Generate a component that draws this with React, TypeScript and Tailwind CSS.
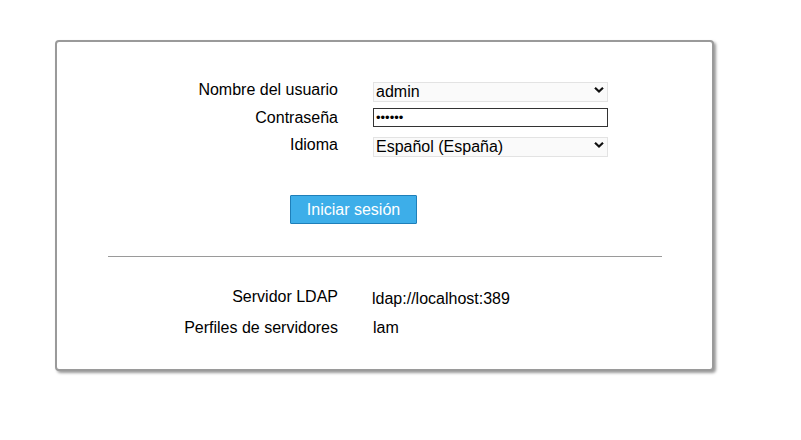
import { useState } from "react";

const Chevron = () => (
  <svg
    className="pointer-events-none absolute right-[4px] top-1/2 -translate-y-1/2"
    width="10"
    height="7"
    viewBox="0 0 10 7"
  >
    <path d="M1 1.2 L5 5 L9 1.2" fill="none" stroke="#111" strokeWidth="2.2" />
  </svg>
);

interface ISelectProps {
  value: string;
  options: string[];
  onChange: (v: string) => void;
}

const Select = ({ value, options, onChange }: ISelectProps) => (
  <div className="relative h-[20px] w-[235px]">
    <select
      value={value}
      onChange={e => onChange(e.target.value)}
      className="h-full w-full appearance-none rounded-none border border-[#e3e3e3] bg-[#fafafa] pl-[2px] text-[16px] leading-[18px] text-black outline-none"
    >
      {options.map(o => (
        <option key={o}>{o}</option>
      ))}
    </select>
    <Chevron />
  </div>
);

const App = () => {
  const [user, setUser] = useState("admin");
  const [lang, setLang] = useState("Español (España)");
  const [pass, setPass] = useState("secret");

  return (
    <div
      className="min-h-[440px] bg-white pl-[55px] pt-[40px] text-[16px] text-black"
      style={{ fontFamily: '"Liberation Sans", Arial, sans-serif' }}
    >
      <div className="h-[331px] w-[659px] rounded-[4px] border-2 border-[#9a9a9a] bg-white shadow-[2px_2px_3px_#9a9a9a]">
        <div className="flex flex-col gap-[8px] pt-[38px]">
          <div className="flex items-center">
            <span className="w-[281px] text-right leading-[18px]">Nombre del usuario</span>
            <div className="ml-[35px]">
              <Select value={user} options={["admin"]} onChange={setUser} />
            </div>
          </div>
          <div className="flex items-center">
            <span className="w-[281px] text-right leading-[18px]">Contraseña</span>
            <input
              type="password"
              value={pass}
              onChange={e => setPass(e.target.value)}
              className="ml-[35px] h-[19px] w-[235px] border border-[#333] bg-white px-[2px] text-[13px] outline-none"
            />
          </div>
          <div className="flex items-center">
            <span className="w-[281px] text-right leading-[18px]">Idioma</span>
            <div className="ml-[35px]">
              <Select
                value={lang}
                options={["Español (España)", "English (GB)", "Deutsch (Deutschland)"]}
                onChange={setLang}
              />
            </div>
          </div>
        </div>

        <div className="ml-[233px] mt-[40px]">
          <button className="h-[29px] w-[127px] rounded-[1px] border border-[#1f7fb9] bg-[#3daee9] text-[16px] text-white">
            Iniciar sesión
          </button>
        </div>

        <div className="ml-[51px] mt-[32px] h-[1px] w-[554px] border-t border-[#9a9a9a]" />

        <div className="flex flex-col gap-[11px] pt-[29px]">
          <div className="flex items-center">
            <span className="w-[281px] text-right leading-[18px]">Servidor LDAP</span>
            <span className="ml-[34px] mt-[4px] leading-[18px]">ldap://localhost:389</span>
          </div>
          <div className="flex items-center">
            <span className="w-[281px] text-right leading-[18px]">Perfiles de servidores</span>
            <span className="ml-[35px] leading-[18px]">lam</span>
          </div>
        </div>
      </div>
    </div>
  );
};

export default App;
